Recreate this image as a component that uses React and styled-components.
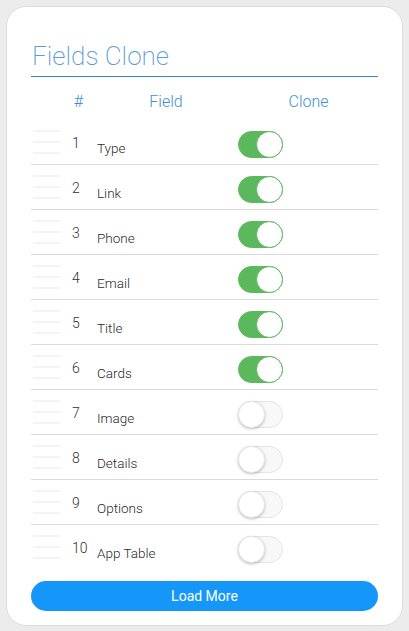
import styled, { createGlobalStyle } from 'styled-components'

const fields = [
    { name: 'Type', on: true },
    { name: 'Link', on: true },
    { name: 'Phone', on: true },
    { name: 'Email', on: true },
    { name: 'Title', on: true },
    { name: 'Cards', on: true },
    { name: 'Image', on: false },
    { name: 'Details', on: false },
    { name: 'Options', on: false },
    { name: 'App Table', on: false },
]

const GlobalStyle = createGlobalStyle`
    html, body {
        margin: 0;
        padding: 0;
        background: #ececec;
        font-family: Roboto, 'Liberation Sans', Arial, sans-serif;
    }
`

export default function App() {
    return (
        <Page>
            <GlobalStyle />
            <Card>
                <Title>Fields Clone</Title>
                <Header>
                    <HeadSpacer />
                    <HeadCell width="29px">#</HeadCell>
                    <HeadCell width="146px">Field</HeadCell>
                    <HeadCell width="139px">Clone</HeadCell>
                </Header>
                <List>
                    {fields.map((field, index) => (
                        <Row key={field.name} last={index === fields.length - 1}>
                            <Handle>
                                <HandleLine />
                                <HandleLine />
                                <HandleLine />
                            </Handle>
                            <Num>{index + 1}</Num>
                            <FieldName>{field.name}</FieldName>
                            <Toggle on={field.on}>
                                <Knob on={field.on} />
                            </Toggle>
                        </Row>
                    ))}
                </List>
                <LoadMore>Load More</LoadMore>
            </Card>
        </Page>
    )
}

const Page = styled.div`
    padding: 6px;
`;
const Card = styled.div`
    box-sizing: border-box;
    width: 397px;
    height: 620px;
    background: #fff;
    border: 1px solid #dcdcdc;
    border-radius: 20px;
    padding: 34px 24px 14px 24px;
    display: flex;
    flex-direction: column;
`;
const Title = styled.h1`
    margin: 0;
    font-size: 26px;
    font-weight: 200;
    line-height: 30px;
    color: #5a9bdb;
    padding: 0 0 5px 1px;
    border-bottom: 1px solid #2f8bc9;
`;
const Header = styled.div`
    display: flex;
    height: 44px;
    box-sizing: border-box;
    padding-top: 15px;
    font-size: 16px;
    font-weight: 300;
    line-height: 20px;
    color: #3f8fd6;
`;
const HeadSpacer = styled.div`
    width: 33px;
`;
const HeadCell = styled.div`
    width: ${props => props.width};
    text-align: center;
`;
const List = styled.div`
    display: flex;
    flex-direction: column;
`;
const Row = styled.div`
    display: flex;
    align-items: flex-start;
    height: 45px;
    box-sizing: border-box;
    border-bottom: ${props => props.last ? 'none' : '1px solid #d9d9d9'};
`;
const Handle = styled.div`
    width: 27px;
    margin: 10px 0 0 2px;
    display: flex;
    flex-direction: column;
    gap: 9px;
`;
const HandleLine = styled.div`
    height: 2px;
    background: #f4f4f4;
`;
const Num = styled.div`
    width: 25px;
    margin: 13px 0 0 12px;
    font-size: 14px;
    font-weight: 300;
    line-height: 20px;
    color: #333;
`;
const FieldName = styled.div`
    width: 141px;
    margin-top: 18px;
    font-size: 13.5px;
    font-weight: 300;
    line-height: 20px;
    color: #2a2a2a;
`;
const Toggle = styled.div`
    position: relative;
    box-sizing: border-box;
    width: 45px;
    height: 27px;
    margin-top: 11px;
    border-radius: 14px;
    background: ${props => props.on ? '#5cb85c' : '#f8f8f8'};
    border: 1px solid ${props => props.on ? '#5cb85c' : '#e4e4e4'};
`;
const Knob = styled.div`
    position: absolute;
    top: -1px;
    ${props => props.on ? 'right: -1px;' : 'left: -1px;'}
    box-sizing: border-box;
    width: 27px;
    height: 27px;
    border-radius: 50%;
    background: #fff;
    border: 1px solid ${props => props.on ? '#5cb85c' : '#e6e6e6'};
    box-shadow: ${props => props.on ? 'none' : '0 1px 3px rgba(0, 0, 0, 0.25)'};
`;
const LoadMore = styled.button`
    margin-top: 11px;
    height: 30px;
    border: none;
    border-radius: 15px;
    background: #1597fa;
    color: #fff;
    font-family: Roboto, 'Liberation Sans', Arial, sans-serif;
    font-size: 14px;
    font-weight: 400;
    cursor: pointer;
`;
